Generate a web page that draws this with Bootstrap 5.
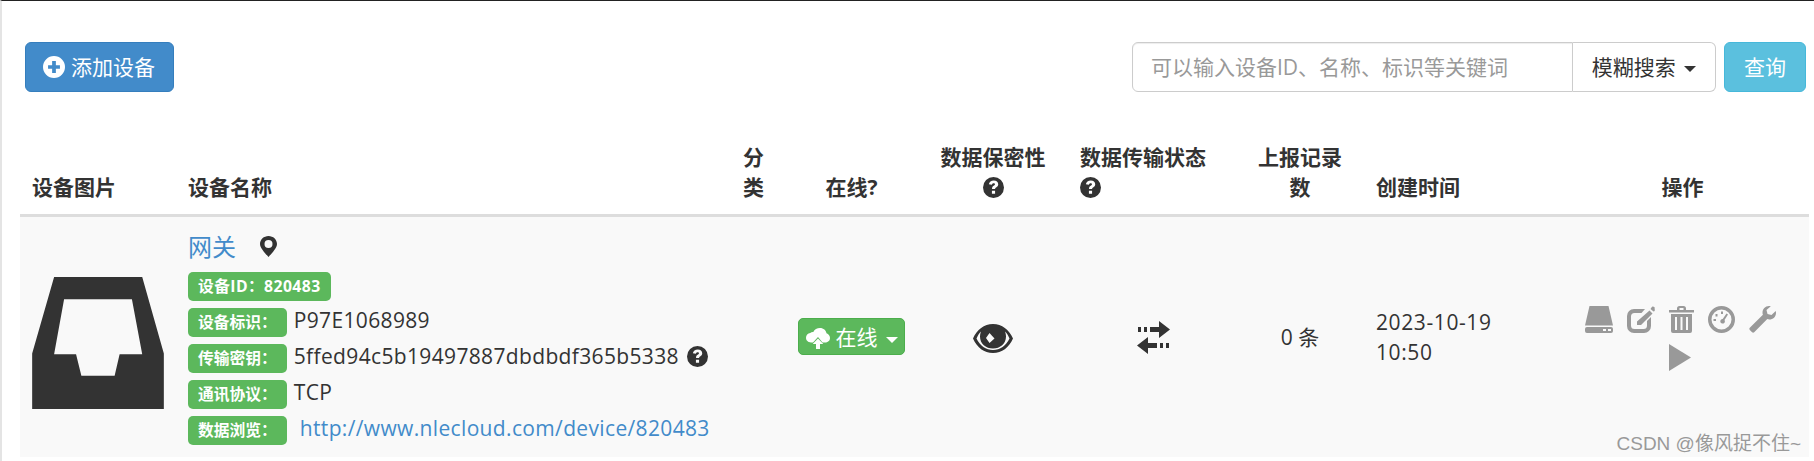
<!DOCTYPE html>
<html lang="zh-CN">
<head>
<meta charset="utf-8">
<title>设备列表</title>
<link href="https://cdn.jsdelivr.net/npm/bootstrap@5.3.0/dist/css/bootstrap.min.css" rel="stylesheet">
<style>
html,body{height:100%;background:#fff;}
body{font-family:"Open Sans","Noto Sans CJK SC",sans-serif;font-size:21px;line-height:30px;color:#333;}
.page-shell{position:relative;height:461px;overflow:hidden;border-top:1px solid #222;border-left:2px solid #e4e4e4;padding:41px 0 0 18px;}
.bar-row{height:50px;padding:0 8px 0 5px;}
.btn-add{background:#428bca;border:1px solid #357ebd;color:#fff;font-size:21px;line-height:30px;padding:9px 18px 9px 17px;border-radius:6px;}
.btn-add:hover{background:#428bca;color:#fff;}
.add-ico{width:22px;height:22px;margin-right:6px;}
.search-group{width:584px;height:50px;}
.search-group .form-control{font-size:21px;height:50px;padding:9px 18px;border-color:#ccc;border-radius:6px 0 0 6px;color:#333;box-shadow:inset 0 1px 1px rgba(0,0,0,.075);}
.search-group .form-control::placeholder{color:#999;}
.search-drop{font-size:21px;line-height:30px;padding:9px 15px;background:#fff;border:1px solid #ccc;border-left:0;border-radius:0 6px 6px 0;color:#333;flex:0 0 143px;white-space:nowrap;}
.btn-query{background:#5bc0de;border:1px solid #46b8da;color:#fff;font-size:21px;line-height:30px;padding:9px 0;width:82px;border-radius:6px;}
.btn-query:hover{background:#5bc0de;color:#fff;}
.dev-table{table-layout:fixed;width:1789px;margin:38px 0 0 0;border-collapse:collapse;}
.dev-table th{vertical-align:bottom;padding:12px;border-bottom:3px solid #ddd;font-weight:700;color:#333;font-size:21px;line-height:30px;background:#fff;}
.dev-table td{background:#f9f9f9;padding:12px;border:0;vertical-align:middle;color:#333;font-size:21px;line-height:30px;height:241px;}
.dev-table th.pad-state{padding-left:21px;}
.dev-table th.pad-count{padding-left:22px;padding-right:22px;}
.dev-table th.pad-time,.dev-table td.pad-time{padding-left:11px;}
.dev-table th.pad-action{padding-right:21px;}
.dev-table td.pad-time{letter-spacing:.6px;}
.dev-table td.img-cell{padding-top:24px;}
.dev-table td.name-cell{padding-top:12px;padding-bottom:0;vertical-align:top;}
.dev-table td.tool-cell{padding-top:16px;padding-right:26px;}
.dev-table td.swap-cell{padding-right:0;}
.ico-dark{fill:#333;}
.tip-ico{width:21px;height:21px;display:inline-block;vertical-align:-3px;}
.tip-ico.tip-gap{margin-left:2px;}
.dev-link{color:#428bca;font-size:24px;line-height:36px;text-decoration:none;}
.url-link{color:#428bca;text-decoration:none;margin-left:6px;}
.pin-ico{width:17px;height:21px;margin-left:24px;vertical-align:-1px;}
.info-line{height:36px;line-height:25px;white-space:nowrap;letter-spacing:.35px;}
.tag-ok{display:inline-block;background:#5cb85c;color:#fff;font-size:15.75px;line-height:29px;height:29px;font-weight:700;padding:0 10px;border-radius:5px;margin-right:7px;vertical-align:top;letter-spacing:0;}
.tag-ok.tag-id{letter-spacing:.4px;}
.name-line{height:43px;}
.btn-online{background:#5cb85c;border:1px solid #4cae4c;color:#fff;font-size:21px;line-height:30px;padding:3px 6px 2px 7px;border-radius:5px;}
.btn-online:hover{background:#5cb85c;color:#fff;}
.cloud-ico{width:24px;height:21px;vertical-align:-4px;}
.eye-ico{width:40px;height:29px;}
.swap-ico{width:35px;height:33px;}
.tool-wrap{column-gap:14px;row-gap:11px;width:196px;margin:0 auto;}
.tool-wrap svg{fill:#999;width:28px;height:27px;display:block;}
.tool-wrap svg.play-ico{width:22px;}
.tool-wrap svg.tool-narrow{width:25px;}
.tool-wrap svg.tool-mid{width:27px;}
.caret-down{display:inline-block;width:0;height:0;border-top:6px solid currentColor;border-left:6px solid transparent;border-right:6px solid transparent;vertical-align:middle;margin-left:3px;}
.water-mark{position:absolute;right:13px;top:430px;font-size:19px;line-height:26px;color:#999;font-family:"Liberation Sans","Noto Sans CJK SC",sans-serif;}
.col-a{width:156px}.col-b{width:555px}.col-c{width:45px}.col-d{width:151px}.col-e{width:132px}.col-f{width:176px}.col-g{width:130px}.col-h{width:200px}.col-i{width:244px}
</style>
</head>
<body>
<div class="page-shell">
  <div class="bar-row d-flex justify-content-between">
    <button type="button" class="btn btn-add d-inline-flex align-items-center">
      <svg class="add-ico" viewBox="0 0 20 20"><path fill="#fff" fill-rule="evenodd" d="M10 0a10 10 0 1 0 0 20a10 10 0 0 0 0-20zM8.300 4.600h3.400v3.700h3.700v3.400h-3.700v3.700H8.300v-3.700H4.600V8.300h3.700z"/></svg>
      添加设备
    </button>
    <div class="d-flex gap-2">
      <div class="search-group d-flex">
        <input type="text" class="form-control" placeholder="可以输入设备ID、名称、标识等关键词">
        <button type="button" class="search-drop">模糊搜索 <span class="caret-down"></span></button>
      </div>
      <button type="button" class="btn btn-query">查询</button>
    </div>
  </div>
  <table class="dev-table">
    <colgroup>
      <col class="col-a"><col class="col-b"><col class="col-c"><col class="col-d"><col class="col-e"><col class="col-f"><col class="col-g"><col class="col-h"><col class="col-i">
    </colgroup>
    <thead>
      <tr>
        <th>设备图片</th>
        <th>设备名称</th>
        <th class="text-center">分类</th>
        <th class="text-center">在线?</th>
        <th class="text-center">数据保密性<br><svg class="tip-ico" viewBox="0 0 20 20"><use href="#q-sign"/></svg></th>
        <th class="pad-state">数据传输状态<br><svg class="tip-ico" viewBox="0 0 20 20"><use href="#q-sign"/></svg></th>
        <th class="pad-count text-center">上报记录数</th>
        <th class="pad-time">创建时间</th>
        <th class="pad-action text-center">操作</th>
      </tr>
    </thead>
    <tbody>
      <tr>
        <td class="img-cell text-center">
          <svg width="132" height="132" viewBox="97 170 396 397" class="d-block"><path class="ico-dark" fill-rule="evenodd" d="M163 170H428L493 400V567H97V400ZM193 237L163 402H229L245 467H345L360 402H428L397 237Z"/></svg>
        </td>
        <td class="name-cell">
          <div class="name-line"><a class="dev-link" href="#">网关</a><svg class="pin-ico" viewBox="0 0 17 21"><path class="ico-dark" fill-rule="evenodd" d="M8.500 0C3.800 0 0 3.600 0 8c0 4 5.500 9.500 8.500 13c3-3.500 8.500-9 8.500-13c0-4.400-3.800-8-8.500-8zM8.500 4a4 4 0 1 1 0 8a4 4 0 0 1 0-8z"/></svg></div>
          <div class="info-line"><span class="tag-ok tag-id">设备ID：820483</span></div>
          <div class="info-line"><span class="tag-ok">设备标识：</span>P97E1068989</div>
          <div class="info-line"><span class="tag-ok">传输密钥：</span>5ffed94c5b19497887dbdbdf365b5338 <svg class="tip-ico tip-gap" viewBox="0 0 20 20"><use href="#q-sign"/></svg></div>
          <div class="info-line"><span class="tag-ok">通讯协议：</span>TCP</div>
          <div class="info-line"><span class="tag-ok">数据浏览：</span><a class="url-link" href="#">http://www.nlecloud.com/device/820483</a></div>
        </td>
        <td></td>
        <td class="text-center">
          <button type="button" class="btn btn-online">
            <svg class="cloud-ico" viewBox="0 0 24 21"><path fill="#fff" fill-rule="evenodd" d="M14 0c3.500 0 6 2.300 6.500 5.200C22.700 6 24 8 24 10c0 2.800-2.300 4.500-5 4.500h-2.500L12 9l-5 5.500H5c-2.800 0-5-2-5-4.700C0 7.300 1.800 5.300 4.200 5C5 4.200 6.200 3.900 7.300 4C8.500 1.600 11 0 14 0zM12 10.500l5.300 5.500H14v5h-4v-5H6.700z"/></svg>
            在线 <span class="caret-down"></span>
          </button>
        </td>
        <td class="text-center">
          <svg class="eye-ico" viewBox="0 0 40 29"><path class="ico-dark" fill-rule="evenodd" d="M20 0C11 0 4 5.500 0 14.500C4 23.500 11 29 20 29s16-5.500 20-14.500C36 5.500 29 0 20 0zM8 7.500C6 9.500 4.500 12 3.500 14.500C6.800 21.700 13 26 20 26s13.200-4.300 16.500-11.500c-1-2.500-2.500-5-4.500-7c.7 1.800 1 3.500 1 5c0 7.200-5.800 12-13 12S7 19.700 7 12.500c0-1.500.3-3.200 1-5zM16.500 9l5 5.500l-5 4.500l-3.500-5z"/></svg>
        </td>
        <td class="swap-cell text-center">
          <svg class="swap-ico" viewBox="0 0 35 33"><path class="ico-dark" d="M2 6h3v5H2zM8 6h3v5H8zM14 6h9V0l11 8.500L23 17v-6h-9zM33 22h-3v5h3zM27 22h-3v5h3zM21 22h-9v-6L1 24.500L12 33v-6h9z"/></svg>
        </td>
        <td class="text-center">0 条</td>
        <td class="pad-time">2023-10-19<br>10:50</td>
        <td class="tool-cell">
          <div class="tool-wrap d-flex flex-wrap justify-content-center">
            <svg viewBox="0 0 28 27"><path fill-rule="evenodd" d="M4.500 0H23.500L28 19.500H0zM2 21H26a2 2 0 0 1 2 2v2a2 2 0 0 1-2 2H2a2 2 0 0 1-2-2v-2a2 2 0 0 1 2-2zM18 23v2h3v-2zM23 23v2h3v-2z"/></svg>
            <svg viewBox="0 0 28 27"><path fill-rule="evenodd" d="M7 3H18L14.500 7H7.500A3.500 3.500 0 0 0 4 10.500V19.500A3.500 3.500 0 0 0 7.500 23H16.500A3.500 3.500 0 0 0 20 19.500V15L24 11V20A7 7 0 0 1 17 27H7A7 7 0 0 1 0 20V10A7 7 0 0 1 7 3zM22.500 4.500L25.500 7.500L14 19H10V15.500zM24.500 1.500A1.500 1.500 0 0 1 27.500 3A1.500 1.500 0 0 1 26.500 5.500L23.500 3z"/></svg>
            <svg class="tool-narrow" viewBox="0 0 25 27"><path fill-rule="evenodd" d="M8 2.500A2.500 2.500 0 0 1 10.500 0h4A2.500 2.500 0 0 1 17 2.500V4h8V6.500H0V4h8zM10.500 2v2h4V2zM2 8H23V25a2 2 0 0 1-2 2H4a2 2 0 0 1-2-2zM6 11V24H8V11zM11.500 11V24H13.500V11zM17 11V24H19V11z"/></svg>
            <svg class="tool-mid" viewBox="0 0 27 27"><path fill-rule="evenodd" d="M13.500 0a13.500 13.500 0 1 0 0 27a13.500 13.500 0 0 0 0-27zM13.500 3.500a10 10 0 1 1 0 20a10 10 0 0 1 0-20zM13 5.500h2v2.500h-2zM7.500 8h2v2.500h-2zM18.500 7.500l1.500 1l-3.500 5.500a2.300 2.300 0 1 1-1.800-1zM5.500 13h2.500v2H5.500z"/></svg>
            <svg class="tool-mid" viewBox="0 0 27 27"><path d="M20 0c-3.800 0-6.500 3-6.500 6.500c0 .8.100 1.500.4 2.200L.8 21.800c-.6.600-.6 1.500 0 2.100l2.300 2.300c.6.600 1.500.6 2.100 0L18.300 13.100c.6.300 1.300.4 2 .4C24 13.500 27 10.800 27 7c0-.8-.1-1.400-.3-2L22.500 9l-4-1-1-4L21.800.300C21.200.1 20.600 0 20 0z"/></svg>
            <svg class="play-ico" viewBox="0 0 22 27"><path d="M0 0L22 13.500L0 27z"/></svg>
          </div>
        </td>
      </tr>
    </tbody>
  </table>
  <div class="water-mark">CSDN @像风捉不住~</div>
</div>
<svg width="0" height="0" class="position-absolute"><defs><path id="q-sign" fill="#333" fill-rule="evenodd" d="M10 0a10 10 0 1 0 0 20a10 10 0 0 0 0-20zM10.300 3.400c2.500 0 4.200 1.400 4.200 3.400c0 1.500-.8 2.300-2 3.100c-.7.500-1 .8-1 1.500H8.600c0-1.600.5-2.300 1.500-3c.8-.6 1.300-.9 1.300-1.500c0-.6-.5-1-1.300-1c-.9 0-1.500.5-1.700 1.500L5.600 7C6 4.800 7.700 3.400 10.300 3.400zM8.500 13h3v3h-3z"/></defs></svg>
<script src="https://cdn.jsdelivr.net/npm/bootstrap@5.3.0/dist/js/bootstrap.bundle.min.js"></script>
</body>
</html>
